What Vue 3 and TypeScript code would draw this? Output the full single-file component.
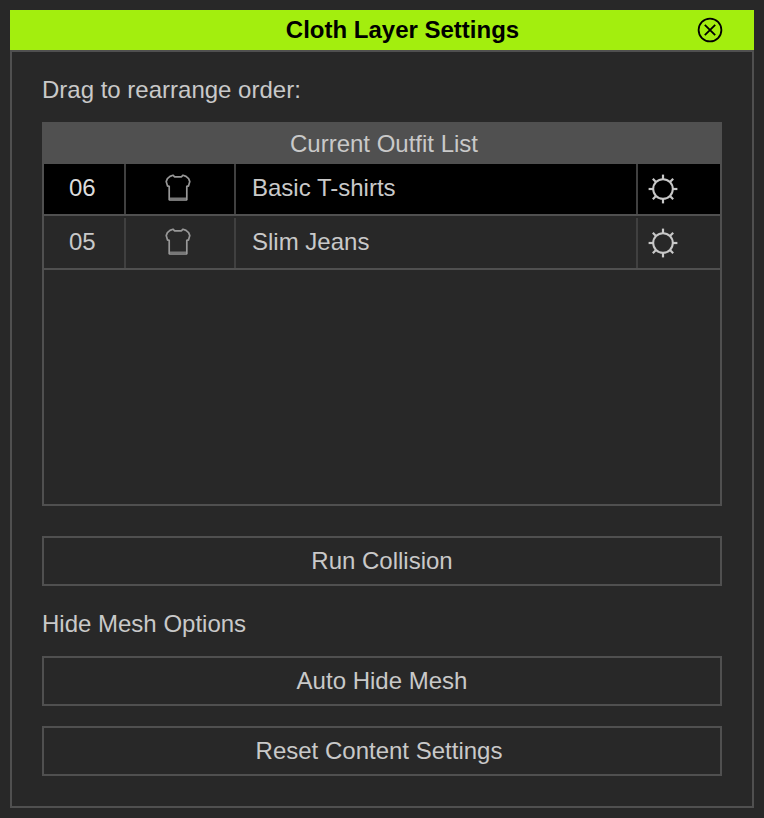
<script setup lang="ts">
interface Outfit {
  order: string;
  name: string;
}

const outfits: Outfit[] = [
  { order: "06", name: "Basic T-shirts" },
  { order: "05", name: "Slim Jeans" },
];

const rays = [0, 45, 90, 135, 180, 225, 270, 315];
</script>

<template>
  <div class="page">
    <header class="title-bar">
      <span class="title">Cloth Layer Settings</span>
      <svg class="close" viewBox="0 0 26 26" width="26" height="26" fill="none" stroke="#000" stroke-width="1.8">
        <circle cx="13" cy="13" r="11.4" />
        <path d="M7.8 7.8 18.2 18.2M18.2 7.8 7.8 18.2" />
      </svg>
    </header>

    <main class="panel">
      <p class="label drag">Drag to rearrange order:</p>

      <section class="list">
        <div class="list-head">Current Outfit List</div>
        <div v-for="(item, i) in outfits" :key="item.order" class="row" :class="{ selected: i === 0 }">
          <div class="cell order">{{ item.order }}</div>
          <div class="cell type">
            <svg viewBox="0 0 26 30" width="26" height="30" fill="none" stroke="#989898" stroke-width="1.7" stroke-linejoin="bevel">
              <path d="M8 2.2 5 3.4 2.4 5.6 1.2 8.6 2.6 13.2H4.2V27H21.8V13.2H23.4L24.8 8.6 23.6 5.6 21 3.4 18 2.2 16.4 3.8H9.6Z" />
              <path d="M5 26H21" stroke="#787878" stroke-width="3" />
            </svg>
          </div>
          <div class="cell name">{{ item.name }}</div>
          <div class="cell state">
            <svg viewBox="0 0 30 30" width="30" height="30" fill="none" stroke="#c8c8c8" stroke-width="2">
              <circle cx="15" cy="15" r="9.8" />
              <path v-for="deg in rays" :key="deg" d="M15 5.4V0.6" stroke-width="2.2" :transform="`rotate(${deg} 15 15)`" />
            </svg>
          </div>
        </div>
      </section>

      <button class="btn run" type="button">Run Collision</button>
      <p class="label hide">Hide Mesh Options</p>
      <button class="btn" type="button">Auto Hide Mesh</button>
      <button class="btn reset" type="button">Reset Content Settings</button>
    </main>
  </div>
</template>

<style scoped>
.page {
  width: 764px;
  height: 818px;
  box-sizing: border-box;
  padding: 10px;
  background: #282828;
  font-family: "Liberation Sans", Arial, sans-serif;
  font-size: 24px;
  color: #c9c9c9;
  overflow: hidden;
}

.title-bar {
  height: 40px;
  display: flex;
  align-items: center;
  background: #a3ee0e;
  color: #000;
}

.title {
  flex: 1;
  padding-left: 98px;
  text-align: center;
  font-weight: 700;
}

.close {
  margin-right: 31px;
}

.panel {
  height: 758px;
  box-sizing: border-box;
  border: 2px solid #505050;
  padding: 0 30px;
  display: flex;
  flex-direction: column;
}

.label {
  margin: 0;
  line-height: 28px;
}

.drag {
  margin-top: 24px;
  margin-bottom: 18px;
}

.list {
  height: 384px;
  box-sizing: border-box;
  border: 2px solid #505050;
  border-top: 0;
}

.list-head {
  height: 42px;
  margin: 0 -2px;
  padding-left: 4px;
  background: #505050;
  text-align: center;
  line-height: 43px;
}

.row {
  display: flex;
  height: 52px;
  box-sizing: border-box;
  border-bottom: 2px solid #505050;
}

.row + .row {
  height: 54px;
  padding-top: 2px;
}

.row.selected {
  background: #000;
}

.row.selected .order {
  color: #dcdcdc;
}

.cell {
  display: flex;
  align-items: center;
  box-sizing: border-box;
  border-right: 2px solid #404040;
}

.order {
  width: 82px;
  padding-left: 25px;
  padding-bottom: 2px;
}

.type {
  width: 110px;
  justify-content: center;
  padding-right: 4px;
  padding-bottom: 2px;
}

.name {
  width: 402px;
  padding-left: 16px;
  padding-bottom: 2px;
}

.state {
  flex: 1;
  border-right: 0;
  padding-left: 10px;
}

.btn {
  display: block;
  width: 100%;
  height: 50px;
  box-sizing: border-box;
  border: 2px solid #505050;
  border-radius: 0;
  padding: 0;
  background: transparent;
  color: inherit;
  font: inherit;
  text-align: center;
}

.run {
  margin-top: 30px;
}

.hide {
  margin-top: 24px;
  margin-bottom: 18px;
}

.reset {
  margin-top: 20px;
  padding-right: 6px;
}
</style>
